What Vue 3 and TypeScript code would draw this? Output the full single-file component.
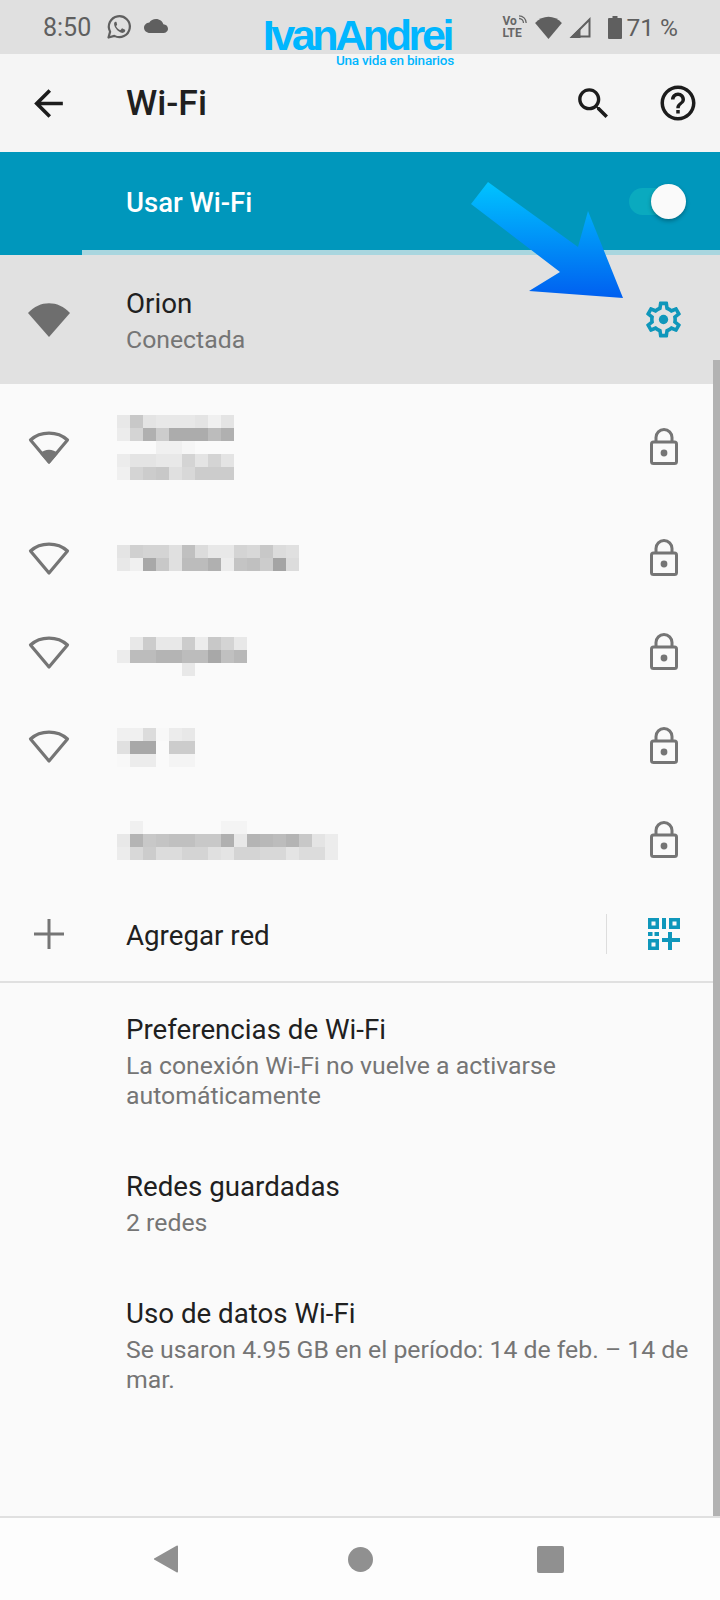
<script setup lang="ts">
interface Net {
  icon: 'low' | 'empty' | 'none'
  height: number
  shift: number
  rows: string[][]
}

// colores de los bloques pixelados de cada nombre de red
const nets: Net[] = [
  {
    icon: 'low',
    height: 126,
    shift: 0,
    rows: [
      ['e8', 'c8', 'e4', 'e8', 'e8', 'e8', 'e4', 'f0', 'e4'],
      ['ec', 'd4', 'b0', 'cc', 'ac', 'ac', 'ac', 'bc', 'b0'],
      ['fa', 'fa', 'fa', 'f0', 'f0', 'f6', 'fa', 'fa', 'fa'],
      ['ec', 'e4', 'e4', 'e8', 'e8', 'd4', 'e4', 'd4', 'e4'],
      ['f0', 'd4', 'cc', 'c8', 'e0', 'd8', 'cc', 'cc', 'cc']
    ]
  },
  {
    icon: 'empty',
    height: 95,
    shift: 0,
    rows: [
      ['e4', 'd0', 'd4', 'd4', 'e0', 'c0', 'dc', 'e8', 'e8', 'd4', 'd8', 'c8', 'dc', 'e0'],
      ['e8', 'f0', 'a8', 'c8', 'e0', 'bc', 'bc', 'b0', 'ec', 'c4', 'c0', 'cc', 'a4', 'dc']
    ]
  },
  {
    icon: 'empty',
    height: 93,
    shift: 10,
    rows: [
      ['fa', 'e8', 'cc', 'e8', 'e8', 'cc', 'ec', 'c8', 'd4', 'e8'],
      ['ec', 'bc', 'bc', 'b4', 'b4', 'bc', 'bc', 'a8', 'c0', 'b8'],
      ['fa', 'fa', 'fa', 'fa', 'fa', 'e8', 'fa', 'fa', 'fa', 'fa']
    ]
  },
  {
    icon: 'empty',
    height: 95,
    shift: 3,
    rows: [
      ['f0', 'f0', 'dc', 'f8', 'ec', 'e8'],
      ['e0', 'a8', 'a8', 'fa', 'cc', 'cc'],
      ['f8', 'ec', 'ec', 'fa', 'f4', 'f4']
    ]
  },
  {
    icon: 'none',
    height: 94,
    shift: 0,
    rows: [
      ['fa', 'f0', 'fa', 'fa', 'fa', 'fa', 'fa', 'fa', 'f4', 'f4', 'fa', 'fa', 'fa', 'fa', 'fa', 'fa', 'fa'],
      ['e8', 'b4', 'c8', 'c4', 'c0', 'c0', 'c8', 'c8', 'b0', 'e8', 'b4', 'b8', 'bc', 'b4', 'c8', 'e4', 'ec'],
      ['ec', 'd8', 'cc', 'dc', 'dc', 'd4', 'd4', 'e0', 'e4', 'd4', 'd4', 'd8', 'd8', 'e4', 'dc', 'dc', 'ec']
    ]
  }
]

const prefs = [
  { title: 'Preferencias de Wi-Fi', sub: ['La conexión Wi-Fi no vuelve a activarse', 'automáticamente'], height: 157 },
  { title: 'Redes guardadas', sub: ['2 redes'], height: 127 },
  { title: 'Uso de datos Wi-Fi', sub: ['Se usaron 4.95 GB en el período: 14 de feb. – 14 de', 'mar.'], height: 150 }
]
</script>

<template>
  <div class="screen">
    <header class="status">
      <span class="time">8:50</span>
      <svg class="st-wa" viewBox="0 0 24 24">
        <path d="M3 21l1.4-5A9 9 0 1 1 8 19.6z" fill="none" stroke="#5f5f5f" stroke-width="1.9" stroke-linejoin="round" />
        <path d="M9 7.5c-.5 0-1.2.6-1.2 2 0 1.5 1 3 1.3 3.4.3.4 2 3.2 5 4 1.8.5 3-.4 3.2-1.6.1-.6 0-.9-.1-1l-2.2-1.1c-.3-.1-.5-.1-.7.2l-.8 1c-.2.2-.4.2-.7.1-1-.4-2.4-1.4-3.2-2.9-.2-.3 0-.5.1-.6l.6-.8c.1-.2.1-.4 0-.6L9.9 7.900c-.2-.4-.4-.4-.9-.4z" fill="#5f5f5f" />
      </svg>
      <svg class="st-cloud" viewBox="0 4 24 16" preserveAspectRatio="none">
        <path d="M19.35 10.04C18.67 6.59 15.64 4 12 4 9.11 4 6.6 5.64 5.35 8.04 2.34 8.36 0 10.91 0 14c0 3.31 2.69 6 6 6h13c2.76 0 5-2.24 5-5 0-2.64-2.05-4.78-4.65-4.96z" fill="#5f5f5f" />
      </svg>
      <div class="st-right">
        <div class="volte">
          <div class="vo-line">Vo<svg class="vo-wave" viewBox="0 0 9 9"><path d="M1 3.500a4.500 4.500 0 0 1 4.500 4.500M1 .8A7.200 7.200 0 0 1 8.200 8" fill="none" stroke="#666" stroke-width="1.300" /></svg></div>
          <div>LTE</div>
        </div>
        <svg class="st-wifi" viewBox="0 0 42 36"><path d="M0 11C12-2 30-2 42 11L21 36Z" fill="#5f5f5f" /></svg>
        <svg class="st-signal" viewBox="0 0 22 21"><path d="M20.500 2.500v17H3.500z" fill="none" stroke="#5f5f5f" stroke-width="2" /><path d="M11.500 10.500V21H.5z" fill="#5f5f5f" /></svg>
        <svg class="st-batt" viewBox="0 0 14 23"><path d="M4.500 0h5v2H13a1 1 0 0 1 1 1v19a1 1 0 0 1-1 1H1a1 1 0 0 1-1-1V3a1 1 0 0 1 1-1h3.500z" fill="#5f5f5f" /></svg>
        <span class="pct">71 %</span>
      </div>
    </header>

    <div class="appbar">
      <svg class="ic-back" viewBox="0 0 24 24"><path d="M20 11H7.830l5.590-5.590L12 4l-8 8 8 8 1.410-1.410L7.830 13H20v-2z" fill="#1c1c1c" /></svg>
      <h1 class="bar-title">Wi-Fi</h1>
      <svg class="ic-search" viewBox="0 0 24 24"><path d="M15.500 14h-.79l-.28-.27C15.410 12.590 16 11.110 16 9.500 16 5.910 13.090 3 9.500 3S3 5.910 3 9.500 5.910 16 9.500 16c1.610 0 3.090-.59 4.230-1.570l.27.28v.79l5 4.990L20.490 19l-4.990-5zm-6 0C7.010 14 5 11.990 5 9.500S7.010 5 9.500 5 14 7.010 14 9.500 11.990 14 9.500 14z" fill="#1c1c1c" /></svg>
      <svg class="ic-help" viewBox="0 0 24 24"><path d="M11 18h2v-2h-2v2zm1-16C6.480 2 2 6.480 2 12s4.480 10 10 10 10-4.480 10-10S17.520 2 12 2zm0 18c-4.410 0-8-3.590-8-8s3.590-8 8-8 8 3.590 8 8-3.590 8-8 8zm0-14c-2.210 0-4 1.790-4 4h2c0-1.100.9-2 2-2s2 .9 2 2c0 2-3 1.750-3 5h2c0-2.250 3-2.500 3-5 0-2.210-1.790-4-4-4z" fill="#1c1c1c" /></svg>
    </div>

    <div class="toggle-bar">
      <span class="toggle-label">Usar Wi-Fi</span>
      <div class="switch"><div class="thumb"></div></div>
    </div>
    <div class="progress"><div class="progress-fill"></div></div>

    <div class="connected">
      <svg class="ic-wifi" viewBox="0 0 42 36"><path d="M0 11C12-2 30-2 42 11L21 35Z" fill="#6e6e6e" /></svg>
      <div class="texts">
        <div class="title">Orion</div>
        <div class="sub sub-gap">Conectada</div>
      </div>
      <svg class="ic-gear" viewBox="0 0 24 24">
        <path d="M19.43 12.98c.04-.32.07-.64.07-.98 0-.34-.03-.66-.07-.98l2.11-1.65c.19-.15.24-.42.12-.64l-2-3.46c-.09-.16-.26-.25-.44-.25-.06 0-.12.01-.17.03l-2.49 1c-.52-.4-1.08-.73-1.69-.98l-.38-2.65C14.46 2.18 14.25 2 14 2h-4c-.25 0-.46.18-.49.42l-.38 2.65c-.61.25-1.17.59-1.69.98l-2.49-1c-.06-.02-.12-.03-.18-.03-.17 0-.34.09-.43.25l-2 3.46c-.13.22-.07.49.12.64l2.11 1.65c-.04.32-.07.65-.07.98 0 .33.03.66.07.98l-2.11 1.65c-.19.15-.24.42-.12.64l2 3.46c.09.16.26.25.44.25.06 0 .12-.01.17-.03l2.49-1c.52.4 1.08.73 1.69.98l.38 2.65c.03.24.24.42.49.42h4c.25 0 .46-.18.49-.42l.38-2.65c.61-.25 1.17-.59 1.69-.98l2.49 1c.06.02.12.03.18.03.17 0 .34-.09.43-.25l2-3.46c.12-.22.07-.49-.12-.64l-2.11-1.65zm-1.98-1.71c.04.31.05.52.05.73 0 .21-.02.43-.05.73l-.14 1.13.89.7 1.08.84-.7 1.21-1.27-.51-1.04-.42-.9.68c-.43.32-.84.56-1.25.73l-1.06.43-.16 1.13-.2 1.35h-1.4l-.19-1.35-.16-1.13-1.06-.43c-.43-.18-.83-.41-1.23-.71l-.91-.7-1.06.43-1.27.51-.7-1.21 1.08-.84.89-.7-.14-1.13c-.03-.31-.05-.54-.05-.74s.02-.43.05-.73l.14-1.13-.89-.7-1.08-.84.7-1.21 1.27.51 1.04.42.9-.68c.43-.32.84-.56 1.25-.73l1.06-.43.16-1.13.2-1.35h1.39l.19 1.35.16 1.13 1.06.43c.43.18.83.41 1.23.71l.91.7 1.06-.43 1.27-.51.7 1.21-1.07.85-.89.7.14 1.13z" fill="#0f97bb" />
        <circle cx="12" cy="12" r="2.600" fill="#0f97bb" />
      </svg>
    </div>

    <div v-for="(n, i) in nets" :key="i" class="net" :style="{ height: n.height + 'px' }">
      <svg v-if="n.icon !== 'none'" class="ic-wifi" viewBox="0 0 42 36">
        <path d="M2.500 11C12.500 1.800 29.500 1.800 39.500 11L21 33Z" fill="none" stroke="#757575" stroke-width="3.200" stroke-linejoin="round" />
        <path v-if="n.icon === 'low'" d="M12 24.500C17 19.500 25 19.500 30 24.500L21 35Z" fill="#757575" />
      </svg>
      <div v-else class="ic-spacer"></div>
      <div class="blur" :style="{ paddingTop: n.shift + 'px' }">
        <div v-for="(row, r) in n.rows" :key="r" class="blur-row">
          <i v-for="(c, k) in row" :key="k" :style="{ background: '#' + c + c + c }"></i>
        </div>
      </div>
      <svg class="ic-lock" viewBox="0 0 30 38">
        <path d="M7 15V9.500a8 8 0 0 1 16 0V15" fill="none" stroke="#757575" stroke-width="3" />
        <rect x="2.500" y="14" width="25" height="21.500" rx="2" fill="none" stroke="#757575" stroke-width="3" />
        <circle cx="15" cy="25" r="3.400" fill="#757575" />
      </svg>
    </div>

    <div class="add-row">
      <svg class="ic-plus" viewBox="0 0 30 30"><path d="M15 0v30M0 15h30" stroke="#757575" stroke-width="3" /></svg>
      <span class="title add-label">Agregar red</span>
      <div class="vline"></div>
      <svg class="ic-qr" viewBox="0 0 32 32">
        <path fill-rule="evenodd" d="M0 0h11v11H0zM3.500 3.500v4h4v-4zM21 0h11v11H21zM24.500 3.500v4h4v-4zM0 21h11v11H0zM3.500 24.500v4h4v-4z" fill="#0f97bb" />
        <path d="M14 0h4v11h-4zM0 14h4.500v4H0zM6.500 14H11v4H6.500zM14 20h18v4H14zM20 14h4v18h-4z" fill="#0f97bb" />
      </svg>
    </div>
    <div class="divider"></div>

    <div v-for="p in prefs" :key="p.title" class="pref" :style="{ height: p.height + 'px' }">
      <div class="title">{{ p.title }}</div>
      <div class="sub sub-gap">
        <div v-for="line in p.sub" :key="line">{{ line }}</div>
      </div>
    </div>

    <div class="spacer"></div>

    <nav class="navbar">
      <svg class="nav-back" viewBox="0 0 25 28"><path d="M24 1.500V26.500a1 1 0 0 1-1.500.8L1 15a1 1 0 0 1 0-2L22.500.7a1 1 0 0 1 1.500.8z" fill="#909090" /></svg>
      <div class="nav-home"></div>
      <div class="nav-square"></div>
    </nav>

    <!-- marca de agua, flecha y barra de scroll van encima del contenido -->
    <div class="logo">
      <div class="logo-main">IvanAndrei</div>
      <div class="logo-sub">Una vida en binarios</div>
    </div>
    <svg class="arrow" viewBox="0 0 720 400">
      <defs>
        <linearGradient id="arrowGrad" x1="0" y1="0" x2="0" y2="1">
          <stop offset="0" stop-color="#00c4ff" />
          <stop offset="1" stop-color="#005ff0" />
        </linearGradient>
      </defs>
      <polygon points="488,182 471,204 560,272 529,291 623,298 588,211 578,247" fill="url(#arrowGrad)" />
    </svg>
    <div class="scrollbar"></div>
  </div>
</template>

<style>
html, body { margin: 0; padding: 0; background: #fafafa; }
</style>

<style scoped>
.screen {
  position: relative;
  width: 720px;
  height: 1600px;
  overflow: hidden;
  display: flex;
  flex-direction: column;
  background: #fafafa;
  font-family: Roboto, "Liberation Sans", sans-serif;
  color: #202020;
}
.status {
  height: 54px;
  flex: none;
  background: #e0e0e0;
  display: flex;
  align-items: center;
  padding: 0 42px 0 43px;
  box-sizing: border-box;
  color: #5f5f5f;
}
.time { font-size: 25px; width: 62px; }
.st-wa { width: 28px; height: 28px; }
.st-cloud { width: 24px; height: 14px; margin-left: 11px; margin-top: -2px; }
.st-right { margin-left: auto; display: flex; align-items: center; }
.volte { font-size: 12px; line-height: 12px; width: 33px; font-weight: 700; color: #666; }
.vo-line { display: flex; align-items: flex-start; }
.vo-wave { width: 9px; height: 9px; margin-left: 1px; }
.st-wifi { width: 27px; height: 23px; }
.st-signal { width: 22px; height: 21px; margin-left: 7px; }
.st-batt { width: 14px; height: 23px; margin-left: 17px; }
.pct { font-size: 24.5px; margin-left: 4px; }
.appbar {
  height: 98px;
  flex: none;
  background: #f5f5f5;
  display: flex;
  align-items: center;
}
.ic-back { width: 43px; height: 43px; margin-left: 27px; }
.bar-title { font-size: 35.5px; font-weight: 500; margin: 0 0 0 56px; flex: 1; color: #202020; }
.ic-search { width: 41px; height: 41px; margin-right: 43px; }
.ic-help { width: 42px; height: 42px; margin-right: 21px; }
.toggle-bar {
  height: 98px;
  flex: none;
  background: #0097bc;
  display: flex;
  align-items: center;
  justify-content: space-between;
  padding-left: 126px;
  padding-right: 39px;
  box-sizing: border-box;
}
.toggle-label { color: #fff; font-size: 27.5px; font-weight: 500; padding-top: 2px; }
.switch {
  position: relative;
  width: 52px;
  height: 27px;
  border-radius: 14px;
  background: #0aaabf;
}
.thumb {
  position: absolute;
  right: -5px;
  top: -4px;
  width: 35px;
  height: 35px;
  border-radius: 50%;
  background: #fafafa;
  box-shadow: 0 2px 4px rgba(0, 0, 0, 0.3);
}
.progress { height: 5px; flex: none; background: #a9d6df; }
.progress-fill { width: 82px; height: 100%; background: #0097bc; }
.connected {
  height: 129px;
  flex: none;
  background: #e1e1e1;
  display: flex;
  align-items: center;
}
.ic-wifi { width: 42px; height: 36px; margin-left: 28px; flex: none; }
.ic-spacer { width: 42px; margin-left: 28px; flex: none; }
.texts { margin-left: 56px; flex: 1; padding-top: 1px; }
.title { font-size: 27.7px; line-height: 36px; color: #202020; }
.sub { font-size: 24.8px; line-height: 30px; color: #757575; }
.sub-gap { margin-top: 3px; }
.ic-gear { width: 43px; height: 43px; margin-right: 35px; }
.net { display: flex; align-items: center; flex: none; }
.blur { margin-left: 47px; flex: 1; }
.blur-row { display: flex; height: 13px; }
.blur-row i { display: block; width: 13px; height: 13px; }
.ic-lock { width: 30px; height: 38px; margin-right: 41px; }
.add-row { height: 94px; flex: none; display: flex; align-items: center; }
.ic-plus { width: 30px; height: 30px; margin-left: 34px; }
.add-label { margin-left: 62px; flex: 1; padding-top: 3px; }
.vline { width: 1px; height: 40px; background: #ddd; }
.ic-qr { width: 32px; height: 32px; margin-left: 41px; margin-right: 40px; }
.divider { height: 2px; flex: none; background: #e0e0e0; }
.pref { flex: none; padding: 29px 20px 0 126px; box-sizing: border-box; }
.spacer { flex: 1; }
.navbar {
  height: 84px;
  flex: none;
  box-sizing: border-box;
  border-top: 2px solid #e0e0e0;
  background: #fdfdfd;
  display: flex;
  align-items: center;
  padding-left: 154px;
}
.nav-back { width: 25px; height: 28px; }
.nav-home { width: 25px; height: 25px; border-radius: 50%; background: #909090; margin-left: 169px; }
.nav-square { width: 27px; height: 27px; border-radius: 2px; background: #909090; margin-left: 164px; }
.logo { position: absolute; right: 266px; top: 17px; text-align: right; color: #00b6ff; }
.logo-main { font-family: "Liberation Sans", sans-serif; font-weight: 700; font-size: 43px; letter-spacing: -3.4px; line-height: 36px; white-space: nowrap; padding-right: 3px; }
.logo-sub { font-size: 13.5px; font-weight: 500; letter-spacing: -0.2px; line-height: 14px; white-space: nowrap; }
.arrow { position: absolute; left: 0; top: 0; width: 720px; height: 400px; pointer-events: none; }
.scrollbar { position: absolute; left: 713px; top: 360px; width: 7px; height: 1156px; background: #b2b2b2; }
</style>
